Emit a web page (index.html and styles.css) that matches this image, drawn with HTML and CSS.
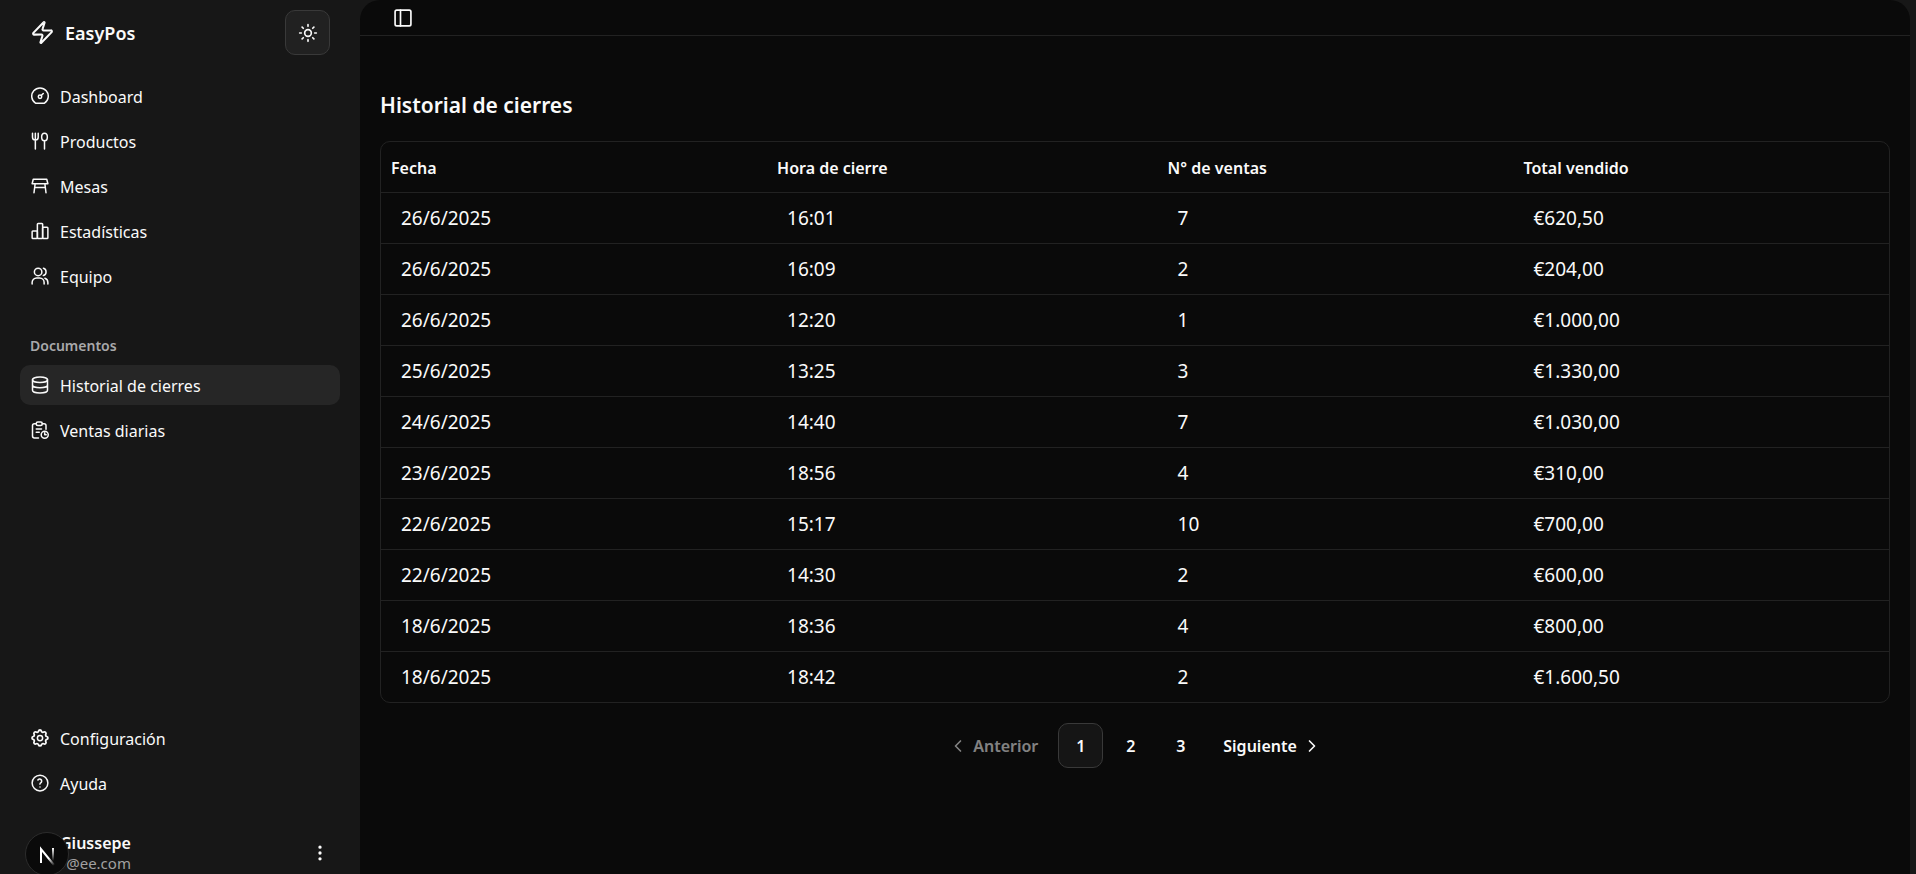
FILE: index.html
```html
<!DOCTYPE html>
<html lang="es">
<head>
<meta charset="utf-8">
<meta name="viewport" content="width=device-width, initial-scale=1">
<title>EasyPos - Historial de cierres</title>
<link rel="stylesheet" href="styles.css">
</head>
<body>
<div class="app">
  <aside class="sidebar">
    <div class="brand-row">
      <a class="brand" href="#">
        <svg class="icon icon-brand" viewBox="0 0 24 24"><path d="M4 14a1 1 0 0 1-.78-1.63l9.9-10.2a.5.5 0 0 1 .86.46l-1.92 6.02A1 1 0 0 0 13 10h7a1 1 0 0 1 .78 1.63l-9.9 10.2a.5.5 0 0 1-.86-.46l1.92-6.02A1 1 0 0 0 11 14z"/></svg>
        <span>EasyPos</span>
      </a>
      <button class="theme-toggle" type="button" aria-label="Cambiar tema">
        <svg class="icon" viewBox="0 0 24 24"><circle cx="12" cy="12" r="4"/><path d="M12 2v2M12 20v2M4.93 4.93l1.41 1.41M17.66 17.66l1.41 1.41M2 12h2M20 12h2M6.34 17.66l-1.41 1.41M19.07 4.93l-1.41 1.41"/></svg>
      </button>
    </div>

    <nav class="nav" aria-label="Principal">
      <a class="nav-item" href="#"><svg class="icon" viewBox="0 0 24 24"><circle cx="12" cy="13" r="2.300"/><path d="M13.700 11.300l2.600-2.600M6 21.500a11 11 0 1 1 12 0z"/></svg>Dashboard</a>
      <a class="nav-item" href="#"><svg class="icon" viewBox="0 0 24 24"><ellipse cx="18" cy="6.500" rx="3.800" ry="5"/><path d="M18 11.500V22.500M2 1.500v5.500a3.800 3.800 0 0 0 7.600 0V1.500M5.800 1.500V22.500"/></svg>Productos</a>
      <a class="nav-item" href="#"><svg class="icon" viewBox="0 0 24 24"><path d="M3 3h18l1.500 6h-21zM5.500 9 4 21M18.500 9 20 21M5 14h14"/></svg>Mesas</a>
      <a class="nav-item" href="#"><svg class="icon" viewBox="0 0 24 24"><rect x="1.500" y="12" width="7" height="10" rx="1"/><rect x="8.500" y="2" width="7" height="20" rx="1"/><rect x="15.500" y="7" width="7" height="15" rx="1"/></svg>Estadísticas</a>
      <a class="nav-item" href="#"><svg class="icon" viewBox="0 0 24 24"><circle cx="9.500" cy="6.500" r="5"/><path d="M1.500 22.500v-2a6 6 0 0 1 6-6h4a6 6 0 0 1 6 6v2M16.500 1.700a5 5 0 0 1 0 9.600M22.500 22.500v-2a6 6 0 0 0-4-5.600"/></svg>Equipo</a>
    </nav>

    <h2 class="nav-label">Documentos</h2>
    <nav class="nav" aria-label="Documentos">
      <a class="nav-item nav-item-active" href="#" aria-current="page"><svg class="icon" viewBox="0 0 24 24"><ellipse cx="12" cy="5" rx="10" ry="3.800"/><path d="M2 5v7c0 2.100 4.500 3.800 10 3.800s10-1.700 10-3.800V5M2 12v7c0 2.100 4.500 3.800 10 3.800s10-1.700 10-3.800V12"/></svg>Historial de cierres</a>
      <a class="nav-item" href="#"><svg class="icon" viewBox="0 0 24 24"><path d="M10 22.500H4.500A2.500 2.500 0 0 1 2 20V6a2.500 2.500 0 0 1 2.500-2.500H7M15 3.500h2.500A2.500 2.500 0 0 1 20 6v5"/><rect x="7" y="1.200" width="8" height="4.800" rx="2"/><path d="M7 10.500h7M7 15h4"/><circle cx="18.300" cy="18.300" r="4.700"/><path d="M18.300 15.800V18.300h2"/></svg>Ventas diarias</a>
    </nav>

    <nav class="nav nav-bottom" aria-label="Soporte">
      <a class="nav-item" href="#"><svg class="icon" viewBox="0 0 24 24"><path d="M10.325 4.317c.426-1.756 2.924-1.756 3.350 0a1.724 1.724 0 0 0 2.573 1.066c1.543-.940 3.310.826 2.370 2.370a1.724 1.724 0 0 0 1.065 2.572c1.756.426 1.756 2.924 0 3.350a1.724 1.724 0 0 0-1.066 2.573c.940 1.543-.826 3.310-2.370 2.370a1.724 1.724 0 0 0-2.572 1.065c-.426 1.756-2.924 1.756-3.350 0a1.724 1.724 0 0 0-2.573-1.066c-1.543.940-3.310-.826-2.370-2.370a1.724 1.724 0 0 0-1.065-2.572c-1.756-.426-1.756-2.924 0-3.350a1.724 1.724 0 0 0 1.066-2.573c-.940-1.543.826-3.310 2.370-2.370 1 .608 2.296.070 2.572-1.065z" transform="translate(-2.200 -2.200) scale(1.180)"/><circle cx="12" cy="12" r="3.500"/></svg>Configuración</a>
      <a class="nav-item" href="#"><svg class="icon" viewBox="0 0 24 24"><circle cx="12" cy="12" r="10.500"/><path d="M12 13.500a2 2 0 0 1 .9-1.800 2.700 2.700 0 1 0-3.700-3.700M12 17.200v.01"/></svg>Ayuda</a>
    </nav>

    <button class="user" type="button">
      <span class="user-text">
        <span class="user-name">Giussepe</span>
        <span class="user-mail">r@ee.com</span>
      </span>
      <svg class="icon icon-dots" viewBox="0 0 24 24"><circle cx="12" cy="5" r="1"/><circle cx="12" cy="12" r="1"/><circle cx="12" cy="19" r="1"/></svg>
    </button>
  </aside>

  <main class="main">
    <header class="topbar">
      <button class="panel-toggle" type="button" aria-label="Alternar barra lateral">
        <svg class="icon" viewBox="0 0 24 24"><rect x="2.500" y="2.500" width="19" height="19" rx="2"/><path d="M9 2.500v19"/></svg>
      </button>
    </header>
    <section class="content">
      <h1 class="title">Historial de cierres</h1>
      <div class="table-frame">
        <table class="table">
          <colgroup><col class="col-date"><col class="col-time"><col class="col-count"><col class="col-total"></colgroup>
          <thead><tr><th scope="col">Fecha</th><th scope="col">Hora de cierre</th><th scope="col">N° de ventas</th><th scope="col">Total vendido</th></tr></thead>
          <tbody>
            <tr><td>26/6/2025</td><td>16:01</td><td>7</td><td>€620,50</td></tr>
            <tr><td>26/6/2025</td><td>16:09</td><td>2</td><td>€204,00</td></tr>
            <tr><td>26/6/2025</td><td>12:20</td><td>1</td><td>€1.000,00</td></tr>
            <tr><td>25/6/2025</td><td>13:25</td><td>3</td><td>€1.330,00</td></tr>
            <tr><td>24/6/2025</td><td>14:40</td><td>7</td><td>€1.030,00</td></tr>
            <tr><td>23/6/2025</td><td>18:56</td><td>4</td><td>€310,00</td></tr>
            <tr><td>22/6/2025</td><td>15:17</td><td>10</td><td>€700,00</td></tr>
            <tr><td>22/6/2025</td><td>14:30</td><td>2</td><td>€600,00</td></tr>
            <tr><td>18/6/2025</td><td>18:36</td><td>4</td><td>€800,00</td></tr>
            <tr><td>18/6/2025</td><td>18:42</td><td>2</td><td>€1.600,50</td></tr>
          </tbody>
        </table>
      </div>
      <nav class="pagination" aria-label="Paginación">
        <button class="page page-step" type="button" disabled><svg class="icon" viewBox="0 0 24 24"><path d="m15 18-6-6 6-6"/></svg>Anterior</button>
        <button class="page page-current" type="button" aria-current="page">1</button>
        <button class="page" type="button">2</button>
        <button class="page" type="button">3</button>
        <button class="page page-step" type="button">Siguiente<svg class="icon" viewBox="0 0 24 24"><path d="m9 18 6-6-6-6"/></svg></button>
      </nav>
    </section>
  </main>

  <button class="dev-badge" type="button" aria-label="Herramientas de desarrollo">
    <svg viewBox="0 0 42 42">
      <defs>
        <linearGradient id="bar" x1="0" y1="0" x2="0" y2="1"><stop offset="0" stop-color="#fff"/><stop offset="1" stop-color="#fff" stop-opacity="0"/></linearGradient>
        <linearGradient id="tail" gradientUnits="userSpaceOnUse" x1="23" y1="25" x2="29" y2="32"><stop offset="0" stop-color="#fff"/><stop offset="1" stop-color="#fff" stop-opacity="0"/></linearGradient>
      </defs>
      <path d="M15 30V16L28 32" fill="none" stroke="url(#tail)" stroke-width="2"/>
      <rect x="26" y="15" width="2" height="13" fill="url(#bar)"/>
    </svg>
  </button>
</div>
</body>
</html>
```
FILE: styles.css
```css
* { box-sizing: border-box; }

body {
  margin: 0;
  background: #171717;
  color: #fafafa;
  font-family: "Noto Sans", "Open Sans", sans-serif;
  font-size: 16px;
  line-height: 24px;
}

button {
  margin: 0;
  padding: 0;
  border: 0;
  background: none;
  color: inherit;
  font: inherit;
}

a { color: inherit; text-decoration: none; }

.icon {
  flex: none;
  width: 20px;
  height: 20px;
  fill: none;
  stroke: currentColor;
  stroke-width: 2;
  stroke-linecap: round;
  stroke-linejoin: round;
}

.app {
  display: flex;
  height: 100vh;
  overflow: hidden;
}

/* Sidebar */
.sidebar {
  display: flex;
  flex-direction: column;
  flex: none;
  width: 360px;
  padding: 10px 20px 0;
}

.brand-row {
  display: flex;
  align-items: center;
  justify-content: space-between;
  padding: 0 10px;
  margin-bottom: 21px;
}

.brand {
  display: flex;
  align-items: center;
  gap: 10px;
  font-size: 18px;
  font-weight: 600;
}

.icon-brand { width: 25px; height: 25px; }

.theme-toggle {
  display: grid;
  place-items: center;
  width: 45px;
  height: 45px;
  border: 1px solid #393939;
  border-radius: 10px;
  background: #212121;
}

.nav {
  display: flex;
  flex-direction: column;
  gap: 5px;
}

.nav-item {
  display: flex;
  align-items: center;
  gap: 10px;
  height: 40px;
  padding: 2px 10px 0;
  border-radius: 10px;
}

.nav-item .icon {
  width: 18px;
  height: 18px;
  margin: 0 1px 3px;
}

.nav-item-active { background: #262626; }

.nav-label {
  margin: 30px 0 0;
  padding: 0 10px;
  height: 39px;
  color: #a9a9ab;
  font-size: 14px;
  font-weight: 600;
  line-height: 39px;
}

.nav-bottom { margin-top: auto; }

.user {
  display: flex;
  align-items: center;
  justify-content: space-between;
  flex: none;
  height: 60px;
  margin: 20px 0 -9px;
  padding: 0 10px 0 40px;
  text-align: left;
}

.user-text { display: flex; flex-direction: column; }
.user-name { font-weight: 600; line-height: 20px; }
.user-mail { color: #a1a1a1; font-size: 15px; line-height: 20px; }

/* Main panel */
.main {
  flex: 1;
  min-width: 0;
  margin-right: 6px;
  border-radius: 20px 20px 0 0;
  background: #0a0a0a;
}

.topbar {
  display: flex;
  align-items: center;
  height: 36px;
  padding: 0 33px;
  border-bottom: 1px solid #222;
}

.panel-toggle { display: flex; }

.content { padding: 52px 20px 0; }

.title {
  margin: 0 0 18px;
  font-size: 21px;
  font-weight: 600;
  line-height: 35px;
}

.table-frame {
  border: 1px solid #222;
  border-radius: 10px;
  overflow: hidden;
}

.table {
  width: 100%;
  border-collapse: collapse;
  table-layout: fixed;
}

.col-date { width: 25.6%; }
.col-time { width: 25.9%; }
.col-count { width: 23.6%; }
.col-total { width: 24.9%; }

.table th,
.table td {
  height: 51px;
  text-align: left;
  border-bottom: 1px solid #222;
}

.table th {
  height: 50px;
  padding: 2px 10px 0;
  font-size: 16px;
  font-weight: 600;
}

.table td {
  padding: 1px 20px 0;
  font-size: 19px;
}

.table tbody tr:last-child td { border-bottom: 0; }

.pagination {
  display: flex;
  justify-content: center;
  gap: 5px;
  margin-top: 20px;
}

.page {
  display: flex;
  align-items: center;
  justify-content: center;
  width: 45px;
  height: 45px;
  border-radius: 10px;
  font-size: 16px;
  font-weight: 600;
}

.page-current {
  border: 1px solid #393939;
  background: #151515;
}

.page-step {
  gap: 5px;
  width: auto;
  padding: 0 15px;
}

.page:disabled { opacity: 0.5; }

/* Floating badge above the sidebar footer */
.dev-badge {
  position: absolute;
  left: 25px;
  bottom: -2px;
  width: 44px;
  height: 44px;
  border: 1px solid #2c2c2c;
  border-radius: 50%;
  background: #0a0a0a;
}

.dev-badge svg { display: block; }
```
